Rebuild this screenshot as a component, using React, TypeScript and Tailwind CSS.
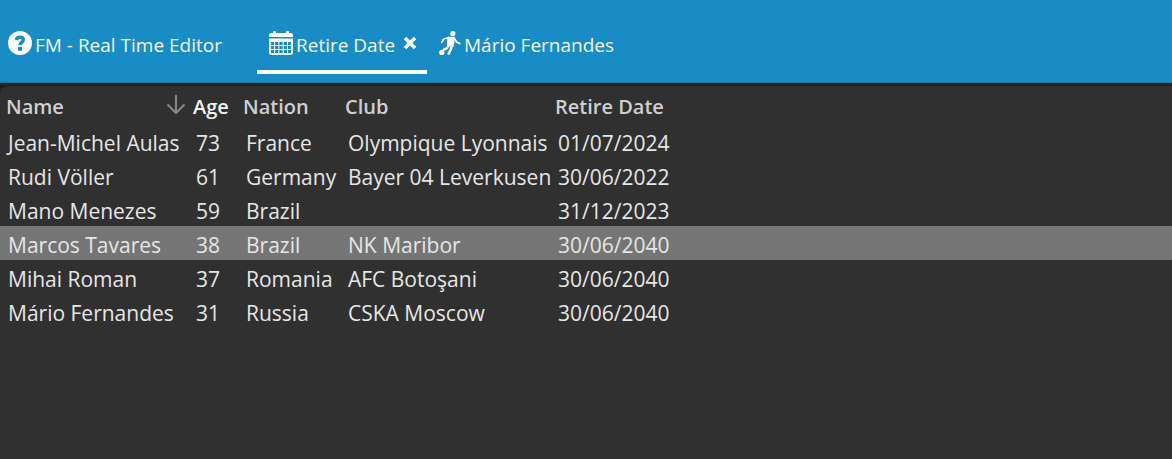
import React, { useState } from 'react';

const people = [
  { name: 'Jean-Michel Aulas', age: 73, nation: 'France', club: 'Olympique Lyonnais', retire: '01/07/2024' },
  { name: 'Rudi Völler', age: 61, nation: 'Germany', club: 'Bayer 04 Leverkusen', retire: '30/06/2022' },
  { name: 'Mano Menezes', age: 59, nation: 'Brazil', club: '', retire: '31/12/2023' },
  { name: 'Marcos Tavares', age: 38, nation: 'Brazil', club: 'NK Maribor', retire: '30/06/2040' },
  { name: 'Mihai Roman', age: 37, nation: 'Romania', club: 'AFC Botoşani', retire: '30/06/2040' },
  { name: 'Mário Fernandes', age: 31, nation: 'Russia', club: 'CSKA Moscow', retire: '30/06/2040' },
];

const HelpIcon = () => (
  <svg viewBox="0 0 24 24" className="h-6 w-6 shrink-0" aria-hidden="true">
    <circle cx="12" cy="12" r="12" fill="white" />
    <path d="M8.4 9C8.7 7 10 6.3 11.9 6.3c2.1 0 3.4 1 3.4 2.6 0 2.6-3.3 2.5-3.3 5.3" fill="none" stroke="#198bc5" strokeWidth="3.4" />
    <rect x="10" y="15.8" width="4" height="4" rx=".5" fill="#198bc5" />
  </svg>
);

const CalendarIcon = () => (
  <svg viewBox="0 0 24 24" className="h-6 w-6 shrink-0" aria-hidden="true">
    <path d="M0 6V4a2 2 0 0 1 2-2h2V1a1 1 0 0 1 1-1h1a1 1 0 0 1 1 1v1h10V1a1 1 0 0 1 1-1h1a1 1 0 0 1 1 1v1h2a2 2 0 0 1 2 2v2z" fill="white" />
    <path
      fillRule="evenodd"
      d="M0 7.5h24V22a2 2 0 0 1-2 2H2a2 2 0 0 1-2-2zM2 11v3h3v-3zM6 11v3h3.3v-3zM10.3 11v3h3.4v-3zM14.7 11v3H18v-3zM19 11v3h3v-3zM2 15v3h3v-3zM6 15v3h3.3v-3zM10.3 15v3h3.4v-3zM14.7 15v3H18v-3zM19 15v3h3v-3zM2 19v3h3v-3zM6 19v3h3.3v-3zM10.3 19v3h3.4v-3zM14.7 19v3H18v-3zM19 19v3h3v-3z"
      fill="white"
    />
  </svg>
);

const PlayerIcon = () => (
  <svg viewBox="0 0 22 24" className="h-6 w-[22px] shrink-0" aria-hidden="true">
    <circle cx="13.8" cy="2.6" r="2.6" fill="white" />
    <circle cx="2.8" cy="21.4" r="2.6" fill="white" />
    <path d="M9 6.2 15.4 6.4 14.4 15.5 8.4 14.5z" fill="white" stroke="white" strokeWidth="1" strokeLinejoin="round" />
    <path d="M9.3 6.7 4.6 8 2.6 11.6M15.2 7 17.5 11 20.7 12.6" fill="none" stroke="white" strokeWidth="1.7" strokeLinecap="round" strokeLinejoin="round" />
    <path d="M9.6 14 8 17.2 5 18.6M12.8 14.6 11.8 18.6 9.6 22.8" fill="none" stroke="white" strokeWidth="2.4" strokeLinecap="round" strokeLinejoin="round" />
  </svg>
);

const App = () => {
  const [activeTab, setActiveTab] = useState('retire');
  const [selected, setSelected] = useState(3);

  const underline = (tab: string) =>
    activeTab === tab ? 'border-white' : 'border-transparent';

  return (
    <div className="flex min-h-screen flex-col bg-[#202020] font-['Open_Sans','Noto_Sans',sans-serif] text-[#e6e6e6]">
      <nav className="flex h-[83px] items-start border-b border-[#1778aa] bg-[#198bc5] pt-4 text-[19px] leading-7 text-[#f2f7fa]">
        <button
          type="button"
          onClick={() => setActiveTab('editor')}
          className={`flex h-[58px] w-[257px] shrink-0 items-start gap-[3px] border-b-4 pt-[15px] pl-2 whitespace-nowrap ${underline('editor')}`}
        >
          <HelpIcon />
          <span>FM - Real Time Editor</span>
        </button>
        <div className={`flex h-[58px] w-[170px] shrink-0 items-start border-b-4 pt-[15px] ${underline('retire')}`}>
          <button
            type="button"
            onClick={() => setActiveTab('retire')}
            className="flex gap-[3px] pl-3 whitespace-nowrap"
          >
            <CalendarIcon />
            <span>Retire Date</span>
          </button>
          <button type="button" aria-label="Close tab" className="mr-[10px] ml-auto flex h-6 items-center">
            <svg viewBox="0 0 14 14" className="h-[14px] w-[14px]" aria-hidden="true">
              <path d="m2 2 10 10M12 2 2 12" stroke="white" strokeWidth="3.6" />
            </svg>
          </button>
        </div>
        <button
          type="button"
          onClick={() => setActiveTab('player')}
          className={`flex h-[58px] items-start gap-[3px] border-b-4 pt-[15px] pl-3 whitespace-nowrap ${underline('player')}`}
        >
          <PlayerIcon />
          <span>Mário Fernandes</span>
        </button>
      </nav>

      <main className="mt-[3px] flex-1 rounded-tl-lg bg-[#303030]">
        <table className="w-full table-fixed border-collapse text-left text-[21px] leading-[30px] whitespace-nowrap">
          <colgroup>
            <col className="w-[188px]" />
            <col className="w-[50px]" />
            <col className="w-[102px]" />
            <col className="w-[210px]" />
            <col />
          </colgroup>
          <thead>
            <tr className="h-[38px] text-[20px] text-[#cfcfcf]">
              <th className="pt-1 pl-[6px] font-semibold">
                <div className="flex items-center justify-between">
                  <span>Name</span>
                  {/* sort direction of the age column */}
                  <svg viewBox="0 0 20 20" className="mr-[2px] mb-1 h-5 w-5" aria-hidden="true">
                    <path d="M10 0v18M1.5 9.5 10 18l8.5-8.5" fill="none" stroke="#858585" strokeWidth="2.2" />
                  </svg>
                </div>
              </th>
              <th aria-sort="descending" className="pt-1 pl-[5px] font-semibold text-[#f2f2f2]">Age</th>
              <th className="pt-1 pl-[5px] font-semibold">Nation</th>
              <th className="pt-1 pl-[5px] font-semibold">Club</th>
              <th className="pt-1 pl-[5px] font-semibold">Retire Date</th>
            </tr>
          </thead>
          <tbody>
            {people.map((person, index) => (
              <tr
                key={person.name}
                onClick={() => setSelected(index)}
                className={selected === index ? 'h-[34px] bg-[#757575]' : 'h-[34px]'}
              >
                <td className="pt-1 pl-2">{person.name}</td>
                <td className="pt-1 pl-2">{person.age}</td>
                <td className="pt-1 pl-2">{person.nation}</td>
                <td className="pt-1 pl-2">{person.club}</td>
                <td className="pt-1 pl-2">{person.retire}</td>
              </tr>
            ))}
          </tbody>
        </table>
      </main>
    </div>
  );
};

export default App;
